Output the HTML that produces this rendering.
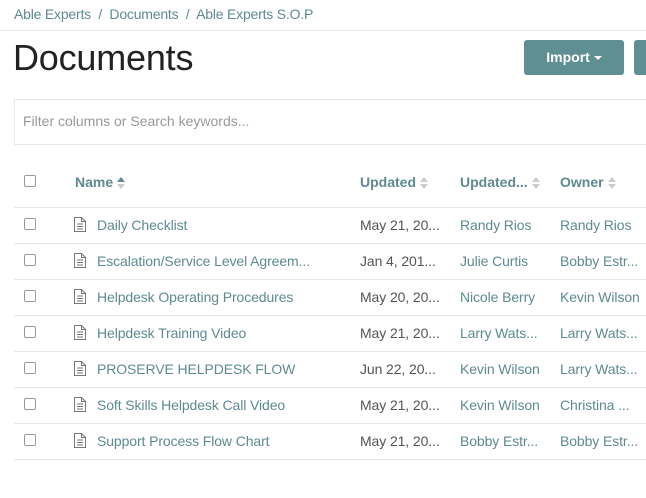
<!DOCTYPE html>
<html><head><style>
*{margin:0;padding:0;box-sizing:border-box}
body{width:646px;height:498px;overflow:hidden;background:#fff;font-family:"Liberation Sans",sans-serif;position:relative}
.a{position:absolute;white-space:nowrap}
.bc{left:14px;top:6px;font-size:14px;color:#5f8a90;letter-spacing:-0.2px}
.l{color:#5f8a90}
.d{color:#555}
.h{font-weight:bold;color:#5f8a90;font-size:14px;top:174px}
.cell{font-size:14px;letter-spacing:-0.1px}
.line{position:absolute;left:14px;right:0;height:1px;background:#e8e8e8}
.cb{position:absolute;left:24px;width:12px;height:12px;border:1px solid #999;border-radius:2px;background:#fff}
.sort{display:inline-block;vertical-align:middle;margin-left:4px;width:8px;height:12px;position:relative}
.sort:before{content:"";position:absolute;top:0;left:0;border-left:4px solid transparent;border-right:4px solid transparent;border-bottom:5px solid #ccc}
.sort:after{content:"";position:absolute;bottom:0;left:0;border-left:4px solid transparent;border-right:4px solid transparent;border-top:5px solid #ccc}
.sort.on:before{border-bottom-color:#5f8a90}
</style></head><body>
<div class="a bc">Able Experts &nbsp;/&nbsp; Documents &nbsp;/&nbsp; Able Experts S.O.P</div>
<div class="line" style="top:30px;left:0"></div>
<div class="a" style="left:13px;top:37px;font-size:36px;color:#222;letter-spacing:-0.2px">Documents</div>
<div class="a" style="left:524px;top:40px;width:100px;height:35px;background:#5f8f93;border-radius:3px;color:#fff;font-size:14px;font-weight:bold;text-align:center;line-height:35px">Import <span style="display:inline-block;border-left:4px solid transparent;border-right:4px solid transparent;border-top:4px solid #fff;vertical-align:middle"></span></div>
<div class="a" style="left:634px;top:40px;width:20px;height:35px;background:#5f8f93;border-radius:3px"></div>
<div class="a" style="left:14px;top:99px;width:640px;height:46px;border:1px solid #e8e8e8;border-right:none"></div>
<div class="a" style="left:23px;top:113px;font-size:14px;color:#999">Filter columns or Search keywords...</div>
<div class="cb" style="top:175px"></div>
<div class="a h" style="left:75px">Name<span class="sort on"></span></div>
<div class="a h" style="left:360px">Updated<span class="sort"></span></div>
<div class="a h" style="left:460px">Updated...<span class="sort"></span></div>
<div class="a h" style="left:560px">Owner<span class="sort"></span></div>
<div class="line" style="top:207px"></div>
<div id="rows"></div>
<script>
var r=[["Daily Checklist","May 21, 20...","Randy Rios","Randy Rios"],
["Escalation/Service Level Agreem...","Jan 4, 201...","Julie Curtis","Bobby Estr..."],
["Helpdesk Operating Procedures","May 20, 20...","Nicole Berry","Kevin Wilson"],
["Helpdesk Training Video","May 21, 20...","Larry Wats...","Larry Wats..."],
["PROSERVE HELPDESK FLOW","Jun 22, 20...","Kevin Wilson","Larry Wats..."],
["Soft Skills Helpdesk Call Video","May 21, 20...","Kevin Wilson","Christina ..."],
["Support Process Flow Chart","May 21, 20...","Bobby Estr...","Bobby Estr..."]];
var h="";
r.forEach(function(x,i){var y=208+i*36;
h+='<div class="cb" style="top:'+(y+10)+'px"></div>';
h+='<svg class="a" style="left:74px;top:'+(y+9)+'px" width="12" height="15" viewBox="0 0 12 15"><path d="M0.5 0.5h7l4 4v10h-11z M7.5 0.5v4h4" fill="none" stroke="#777"/><path d="M3 7h6M3 9.5h6M3 12h6" stroke="#777"/></svg>';
h+='<div class="a cell l" style="left:97px;top:'+(y+9)+'px">'+x[0]+'</div>';
h+='<div class="a cell d" style="left:360px;top:'+(y+9)+'px">'+x[1]+'</div>';
h+='<div class="a cell l" style="left:460px;top:'+(y+9)+'px">'+x[2]+'</div>';
h+='<div class="a cell l" style="left:560px;top:'+(y+9)+'px">'+x[3]+'</div>';
h+='<div class="line" style="top:'+(y+35)+'px"></div>';});
document.getElementById("rows").innerHTML=h;
</script>
</body></html>
